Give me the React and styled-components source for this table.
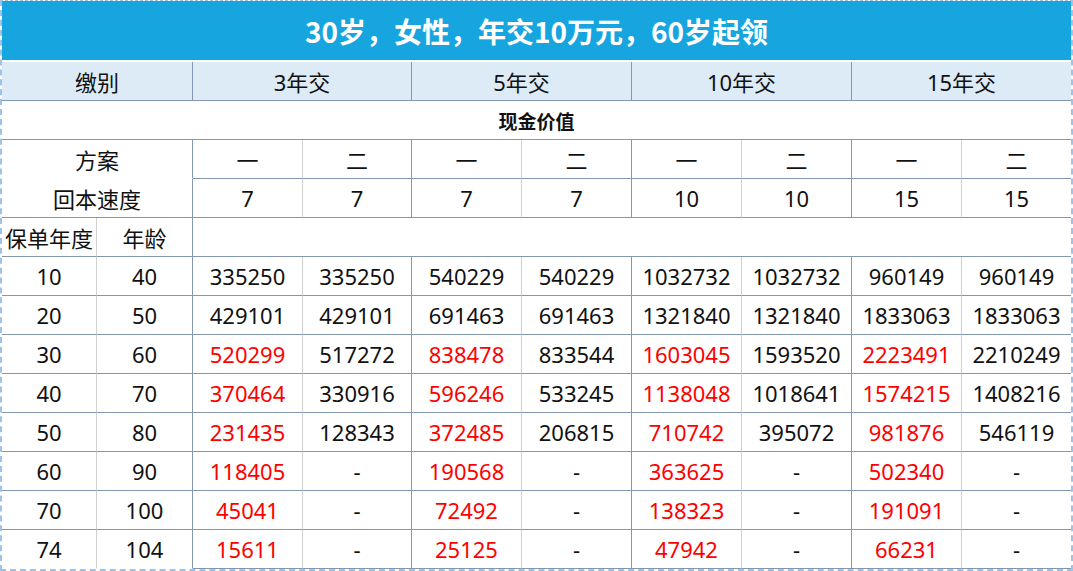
import styled, { createGlobalStyle } from "styled-components";

const GlobalStyle = createGlobalStyle`
  html, body {
    margin: 0;
    padding: 0;
    background: #ffffff;
  }
  body {
    font-family: "Noto Sans", "Noto Sans CJK SC", sans-serif;
    color: #111111;
  }
`

const Frame = styled.div`
  width: 1073px;
  box-sizing: border-box;
  border-top: 1px dashed #9dc3e6;
  border-left: 2px dashed #9dc3e6;
  border-right: 2px dashed #9dc3e6;
  border-bottom: 2px dashed #9dc3e6;
`

const Table = styled.table`
  width: 100%;
  table-layout: fixed;
  border-collapse: separate;
  border-spacing: 0;
`

const Title = styled.td`
  height: 59px;
  background: #17a5e0;
  color: #ffffff;
  text-align: center;
  font-family: "Noto Sans CJK SC", sans-serif;
  font-weight: 700;
  font-size: 28px;
  border-bottom: 2px solid #ffffff;
  padding: 0;
`

const Head = styled.td`
  height: 38px;
  background: #ddebf7;
  text-align: center;
  font-size: 22px;
  border-bottom: 1px solid #8497b0;
  border-right: ${p => (p.$last ? "none" : "1px solid #8497b0")};
  padding: 0;
`

const Section = styled.td`
  height: 38px;
  text-align: center;
  font-family: "Noto Sans CJK SC", sans-serif;
  font-weight: 700;
  font-size: 19px;
  border-bottom: 1px solid #8497b0;
  padding: 0;
`

const Cell = styled.td`
  height: 38px;
  text-align: center;
  font-size: 22px;
  white-space: nowrap;
  overflow: hidden;
  padding: 0;
  color: ${p => (p.$red ? "#ff0000" : "#111111")};
  border-bottom: ${p => (p.$open ? "1px solid transparent" : "1px solid #8497b0")};
  border-right: ${p =>
    p.$edge ? "none" : p.$minor ? "1px solid #d0d0d0" : "1px solid #8497b0"};
`

const groups = ["3年交", "5年交", "10年交", "15年交"]
const speed = [7, 7, 7, 7, 10, 10, 15, 15]
const widths = [110, 109, 110, 110, 110, 110, 110, 109]

const rows = [
    [10, 40, ["335250", "335250", "540229", "540229", "1032732", "1032732", "960149", "960149"], false],
    [20, 50, ["429101", "429101", "691463", "691463", "1321840", "1321840", "1833063", "1833063"], false],
    [30, 60, ["520299", "517272", "838478", "833544", "1603045", "1593520", "2223491", "2210249"], true],
    [40, 70, ["370464", "330916", "596246", "533245", "1138048", "1018641", "1574215", "1408216"], true],
    [50, 80, ["231435", "128343", "372485", "206815", "710742", "395072", "981876", "546119"], true],
    [60, 90, ["118405", "-", "190568", "-", "363625", "-", "502340", "-"], true],
    [70, 100, ["45041", "-", "72492", "-", "138323", "-", "191091", "-"], true],
    [74, 104, ["15611", "-", "25125", "-", "47942", "-", "66231", "-"], true],
]

const ValueCells = ({values, redFirst}) =>
    values.map((v, i) => (
        <Cell
            key={i}
            $minor={i % 2 === 0}
            $edge={i === values.length - 1}
            $red={redFirst && i % 2 === 0}
        >
            {v}
        </Cell>
    ))

const App = () => {
    return (
        <>
            <GlobalStyle/>
            <Frame>
                <Table>
                    <colgroup>
                        <col style={{width: 95}}/>
                        <col style={{width: 96}}/>
                        {widths.map((w, i) => <col key={i} style={{width: w}}/>)}
                    </colgroup>
                    <tbody>
                    <tr>
                        <Title colSpan={10}>30岁，女性，年交10万元，60岁起领</Title>
                    </tr>
                    <tr>
                        <Head colSpan={2}>缴别</Head>
                        {groups.map((g, i) => (
                            <Head key={g} colSpan={2} $last={i === groups.length - 1}>{g}</Head>
                        ))}
                    </tr>
                    <tr>
                        <Section colSpan={10}>现金价值</Section>
                    </tr>
                    <tr>
                        <Cell colSpan={2} $open>方案</Cell>
                        <ValueCells values={["一", "二", "一", "二", "一", "二", "一", "二"]}/>
                    </tr>
                    <tr>
                        <Cell colSpan={2}>回本速度</Cell>
                        <ValueCells values={speed}/>
                    </tr>
                    <tr>
                        <Cell $minor>保单年度</Cell>
                        <Cell>年龄</Cell>
                        <Cell colSpan={8} $edge/>
                    </tr>
                    {rows.map(([year, age, values, red], r) => (
                        <tr key={year}>
                            <Cell $minor $open={r === rows.length - 1}>{year}</Cell>
                            <Cell $open={r === rows.length - 1}>{age}</Cell>
                            <ValueCells values={values} redFirst={red}/>
                        </tr>
                    ))}
                    </tbody>
                </Table>
            </Frame>
        </>
    )
}

export default App
